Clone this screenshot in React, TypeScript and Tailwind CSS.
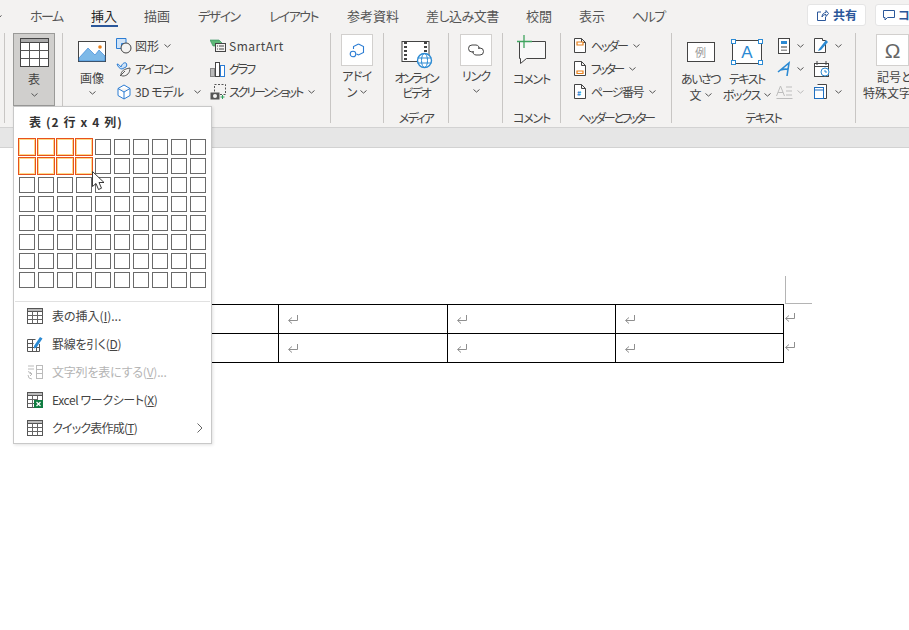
import React from "react";

const Chev = ({ c = "#555" }: { c?: string }) => (
  <svg width="7" height="4" viewBox="0 0 7 4" className="shrink-0">
    <path d="M.5.5l3 2.600 3-2.600" fill="none" stroke={c} strokeWidth="1" />
  </svg>
);

const Sep = () => <div className="w-px h-[90px] bg-[#c8c6c4] shrink-0" />;

const Group = ({ w, label, tr = "", children }: { w: string; label?: string; tr?: string; children?: React.ReactNode }) => (
  <div className={`${w} h-[94px] shrink-0 flex flex-col`}>
    <div className="h-[76px] flex">{children}</div>
    <div className={`h-[18px] leading-[18px] text-center text-[12px] text-[#444] whitespace-nowrap ${tr}`}>{label}</div>
  </div>
);

const Row = ({ icon, text, gap = "gap-[3px]", chev = true, chevGap = "ml-[2px]", tr = "" }: { icon: React.ReactNode; text: string; gap?: string; chev?: boolean; chevGap?: string; tr?: string }) => (
  <div className={`h-[23px] flex items-center ${gap} text-[12px] text-[#444] whitespace-nowrap`}>
    <span className="shrink-0 flex">{icon}</span>
    <span className={tr}>{text}</span>
    {chev && <span className={chevGap}><Chev /></span>}
  </div>
);

const GridIcon = () => (
  <svg width="16" height="16" viewBox="0 0 16 16" className="shrink-0">
    <rect x=".5" y=".5" width="15" height="15" fill="#fff" stroke="#555" />
    <rect x=".5" y=".5" width="15" height="3" fill="#bbb" stroke="#555" />
    <path d="M5.500 3.500v12M10.500 3.500v12M.5 7.500h15M.5 11.500h15" stroke="#666" fill="none" />
  </svg>
);

const Ret = ({ className = "" }: { className?: string }) => (
  <svg width="12" height="11" viewBox="0 0 12 11" className={className}>
    <path d="M10.500 1v5.500H2M5 3.500l-3.500 3 3.500 3" fill="none" stroke="#8f8f8f" strokeWidth="1" />
  </svg>
);

const tabs = [
  { t: "ホーム", w: "w-[61px]", tr: "tracking-[-1.5px]" },
  { t: "挿入", w: "w-[27px] mr-[26px]", tr: "" },
  { t: "描画", w: "w-[54px]", tr: "" },
  { t: "デザイン", w: "w-[71px]", tr: "tracking-[-1.5px]" },
  { t: "レイアウト", w: "w-[78px]", tr: "tracking-[-1.6px]" },
  { t: "参考資料", w: "w-[79px]", tr: "" },
  { t: "差し込み文書", w: "w-[100px]", tr: "tracking-[-0.5px]" },
  { t: "校閲", w: "w-[53px]", tr: "" },
  { t: "表示", w: "w-[53px]", tr: "" },
  { t: "ヘルプ", w: "w-[32px]", tr: "tracking-[-1.5px]" },
];

const TableRow = () => (
  <div className="flex items-center ml-[111px]">
    <div className="flex h-[29px] border-t border-black">
      {["w-[168px]", "w-[169px]", "w-[168px]", "w-[168px]"].map((w, i) => (
        <div key={i} className={`${w} border-r border-black pl-[8px] pt-[9px]`}>
          <Ret />
        </div>
      ))}
    </div>
    <Ret className="-mt-[2px]" />
  </div>
);

export default function App() {
  return (
    <div className="relative w-[909px] h-[630px] overflow-hidden bg-white [font-family:'Noto_Sans_CJK_JP','Liberation_Sans',sans-serif] [font-feature-settings:'palt']">
      {/* tab bar */}
      <div className="h-[33px] bg-[#f3f2f1] flex items-start">
        <div className="w-[30px] pt-[15px] -ml-[5px] mr-[5px] shrink-0"><Chev /></div>
        <div className="flex shrink-0">
          {tabs.map(({ t, w, tr }) => (
            <div
              key={t}
              className={`${w} ${tr} mt-[8px] h-[19px] leading-[16px] text-[13px] border-b-2 whitespace-nowrap ${t === "挿入" ? "border-[#2b579a] text-[#262626]" : "border-transparent text-[#555]"}`}
            >
              {t}
            </div>
          ))}
        </div>
        <div className="flex-1" />
        <div className="mt-[4px] shrink-0 w-[59px] h-[22px] mr-[9px] rounded-[3px] bg-white border border-[#e5e5e5] flex items-center justify-center gap-[4px] text-[12px] font-bold text-[#2b579a]">
          <svg width="13" height="13" viewBox="0 0 13 13">
            <path d="M5 3H1.500v8.500h8V8M6 8c0-3 2-4.500 4-4.500V1.500l2.500 3-2.500 3V5.500C8.500 5.500 7 6 6 8z" fill="none" stroke="#2b579a" />
          </svg>
          共有
        </div>
        <div className="mt-[4px] shrink-0 w-[35px] -mr-px h-[22px] rounded-l-[3px] bg-white border border-[#e5e5e5] flex items-center pl-[7px] gap-[3px] text-[12px] font-bold text-[#2b579a] overflow-hidden">
          <svg width="12" height="12" viewBox="0 0 12 12" className="shrink-0">
            <path d="M.5 1.500h11v7h-7l-2.500 2.500v-2.500h-1.500z" fill="none" stroke="#2b579a" />
          </svg>
          コ
        </div>
      </div>

      {/* ribbon */}
      <div className="h-[94px] bg-[#f3f2f1] flex overflow-hidden">
        <div className="w-[4px] shrink-0" />
        <Sep />
        <Group w="w-[57px]">
          <div className="ml-[8px] w-[42px] h-[73px] bg-[#d0cfcd] border border-[#9a9a98] flex flex-col items-center">
            <svg width="29" height="29" viewBox="0 0 29 29" className="mt-[4px] shrink-0">
              <rect x=".5" y=".5" width="28" height="28" fill="#fff" stroke="#444" />
              <rect x=".5" y=".5" width="28" height="4" fill="#aaa" stroke="#444" />
              <path d="M9.500 4.500v24M19.500 4.500v24M.5 12.500h28M.5 20.500h28" stroke="#555" fill="none" />
            </svg>
            <div className="text-[12px] leading-[16px] mt-[4px] text-[#444]">表</div>
            <div className="mt-[6px]"><Chev /></div>
          </div>
        </Group>
        <Sep />
        <Group w="w-[267px]">
          <div className="ml-[15px] w-[28px] flex flex-col items-center shrink-0">
            <svg width="28" height="21" viewBox="0 0 28 21" className="mt-[8px] shrink-0">
              <rect x=".5" y=".5" width="27" height="20" fill="#fff" stroke="#444" />
              <path d="M1 17l9-10 7 7 4-5 6 6v5H1z" fill="#7db9e8" stroke="#2b7cd3" strokeWidth=".6" />
              <circle cx="22" cy="6" r="1.800" fill="#e8801a" />
            </svg>
            <div className="text-[12px] leading-[16px] mt-[8px] text-[#444] whitespace-nowrap">画像</div>
            <div className="mt-[5px]"><Chev /></div>
          </div>
          <div className="ml-[10px] w-[94px] shrink-0 pt-px">
            <Row
              text="図形"
              icon={
                <svg width="16" height="16" viewBox="0 0 16 16">
                  <path d="M.5.5h9.500v5H5.500V10.500H.5z" fill="#cfe3f7" stroke="#2b7cd3" />
                  <circle cx="10" cy="10" r="5" fill="#f3f2f1" stroke="#444" />
                </svg>
              }
            />
            <Row
              text="アイコン"
              chev={false}
              tr="tracking-[-1.5px]"
              icon={
                <svg width="16" height="16" viewBox="0 0 16 16">
                  <path d="M1 3c2 0 3 2 4 3 1-3 3-5 5-4 1 1 1 3 0 4-1 1-3 1-4 2-2 0-4-2-5-5z" fill="#cfe3f7" stroke="#2b7cd3" />
                  <path d="M5 14c0-4 3-6 9-7 0 5-3 8-7 8-1 0-2-.5-2-1zM4 15l5-5" fill="#f3f2f1" stroke="#555" />
                </svg>
              }
            />
            <Row
              text="3D モデル"
              tr="tracking-[-0.5px]"
              chevGap="ml-[8px]"
              icon={
                <svg width="16" height="16" viewBox="0 0 16 16">
                  <path d="M8 1l6 3.500v7L8 15l-6-3.500v-7zM2 4.500L8 8l6-3.500M8 8v7" fill="#fff" stroke="#2b7cd3" />
                </svg>
              }
            />
          </div>
          <div className="w-[110px] shrink-0 pt-px">
            <Row
              text="SmartArt"
              chev={false}
              tr="tracking-[0.5px]"
              icon={
                <svg width="16" height="16" viewBox="0 0 16 16">
                  <path d="M0 2h9l3 3-3 3H3z" fill="#5fb878" stroke="#2e8b57" strokeWidth=".6" />
                  <rect x="5.500" y="5.500" width="10" height="8" fill="#f3f2f1" stroke="#444" />
                  <path d="M7 8h1M9 8h5M7 11h1M9 11h5" stroke="#444" />
                </svg>
              }
            />
            <Row
              text="グラフ"
              chev={false}
              tr="tracking-[-2px]"
              icon={
                <svg width="16" height="16" viewBox="0 0 16 16">
                  <rect x=".5" y="7.500" width="4" height="8" fill="#bbb" stroke="#888" />
                  <rect x="5.500" y="1.500" width="4" height="14" fill="#fff" stroke="#444" />
                  <rect x="10.500" y="4.500" width="4" height="11" fill="#fff" stroke="#2b7cd3" />
                </svg>
              }
            />
            <Row
              text="スクリーンショット"
              tr="tracking-[-2.1px]"
              chevGap="ml-[3px]"
              icon={
                <svg width="16" height="16" viewBox="0 0 16 16">
                  <rect x="4.500" y=".5" width="11" height="10" fill="none" stroke="#555" strokeDasharray="2 1.500" />
                  <rect x=".5" y="8.500" width="9" height="7" fill="#555" />
                  <circle cx="5" cy="12" r="2" fill="#f3f2f1" />
                  <path d="M12.500 11v4M10.500 13h4" stroke="#2e9e5b" />
                </svg>
              }
            />
          </div>
        </Group>
        <Sep />
        <Group w="w-[52px]">
          <div className="ml-[10px] w-[32px] flex flex-col items-center shrink-0">
            <div className="w-[32px] h-[32px] mt-px shrink-0 bg-white border border-[#d2d0ce] flex items-center justify-center">
              <svg width="17" height="17" viewBox="0 0 17 17">
                <path d="M9.500 2l5 2.500v6l-5 2.500-2-1M4.500 7V4.500l5-2.500" fill="none" stroke="#2b7cd3" strokeWidth="1.100" />
                <circle cx="4" cy="12" r="2.800" fill="none" stroke="#2b7cd3" strokeWidth="1.100" />
              </svg>
            </div>
            <div className="text-[12px] leading-[16px] mt-[2px] text-[#444] whitespace-nowrap text-center tracking-[-0.5px]">アドイ</div>
            <div className="text-[12px] leading-[16px] text-[#444] whitespace-nowrap flex items-center gap-[3px]">ン<Chev /></div>
          </div>
        </Group>
        <Sep />
        <Group w="w-[64px]" label="メディア" tr="tracking-[-1.7px]">
          <div className="w-full flex flex-col items-center">
            <svg width="32" height="28" viewBox="0 0 32 28" className="mt-[8px] ml-[2px] shrink-0">
              <rect x="1" y=".5" width="27" height="20" fill="#fff" stroke="#444" />
              <path d="M4.500 1v20M24.500 1v20" stroke="#444" strokeWidth="3" strokeDasharray="2 2" />
              <circle cx="23.500" cy="19.500" r="7" fill="#fff" stroke="#2b8ad3" strokeWidth="1.400" />
              <ellipse cx="23.500" cy="19.500" rx="3" ry="7" fill="none" stroke="#2b8ad3" />
              <path d="M16.500 17h14M16.500 22h14" stroke="#2b8ad3" />
            </svg>
            <div className="text-[12px] leading-[15px] mt-px text-[#444] whitespace-nowrap text-center tracking-[-2px]">オンライン<br />ビデオ</div>
          </div>
        </Group>
        <Sep />
        <Group w="w-[53px]">
          <div className="ml-[11px] w-[32px] flex flex-col items-center shrink-0">
            <div className="w-[32px] h-[32px] mt-px shrink-0 bg-white border border-[#d2d0ce] flex items-center justify-center">
              <svg width="18" height="12" viewBox="0 0 18 12">
                <path d="M7 8H5a3.500 3.500 0 010-7h4a3.500 3.500 0 013 4" fill="none" stroke="#444" />
                <path d="M11 4h2a3.500 3.500 0 010 7H9a3.500 3.500 0 01-3-4" fill="none" stroke="#444" />
              </svg>
            </div>
            <div className="text-[12px] leading-[16px] mt-[2px] text-[#444] whitespace-nowrap tracking-[-1px]">リンク</div>
            <div className="mt-[5px]"><Chev /></div>
          </div>
        </Group>
        <Sep />
        <Group w="w-[57px]" label="コメント" tr="tracking-[-1.2px]">
          <div className="w-full flex flex-col items-center">
            <svg width="31" height="29" viewBox="0 0 31 29" className="mt-[2px] shrink-0">
              <path d="M3.500 6.500h26v17h-19l-6 5v-5h-1z" fill="#f8f8f8" stroke="#444" />
              <path d="M8 0v13M1 6.500h15" stroke="#3fa45f" strokeWidth="1.300" />
            </svg>
            <div className="text-[12px] leading-[16px] mt-[7px] text-[#444] whitespace-nowrap tracking-[-1.2px]">コメント</div>
          </div>
        </Group>
        <Sep />
        <Group w="w-[110px]" label="ヘッダーとフッター" tr="tracking-[-2.4px]">
          <div className="ml-[13px] pt-px">
            {[
              ["ヘッダー", "M3 4h6v3H3z", "#e8801a", "tracking-[-2.2px]"],
              ["フッター", "M3 10h6v2.500H3z", "#e8801a", "tracking-[-2.5px]"],
              ["ページ番号", "", "", "tracking-[-1.5px]"],
            ].map(([t, d, c, tr]) => (
              <Row
                key={t}
                text={t}
                tr={tr}
                gap="gap-[5px]"
                chevGap="ml-px"
                icon={
                  <svg width="12" height="15" viewBox="0 0 12 15">
                    <path d="M.5.5h7l4 4v10H.5zM7.500.5v4h4" fill="#fff" stroke="#444" />
                    {d ? <path d={d} fill="#fff" stroke={c} strokeWidth="1.200" /> : <text x="3" y="12" fontSize="7" fontWeight="bold" fill="#2b8ad3">#</text>}
                  </svg>
                }
              />
            ))}
          </div>
        </Group>
        <Sep />
        <Group w="w-[183px]" label="テキスト" tr="tracking-[-1.5px]">
          <div className="w-[57px] shrink-0 flex flex-col items-center">
            <div className="mt-[9px] w-[28px] h-[20px] shrink-0 border border-[#444] bg-white flex items-center justify-center text-[11px] text-[#999] leading-none">例</div>
            <div className="text-[12px] leading-[16px] mt-[9px] text-[#444] whitespace-nowrap tracking-[-1.5px]">あいさつ</div>
            <div className="text-[12px] leading-[15px] text-[#444] whitespace-nowrap flex items-center gap-[3px]">文<Chev /></div>
          </div>
          <div className="w-[36px] shrink-0 mr-[13px] flex flex-col items-center">
            <div className="relative mt-[7px] w-[30px] h-[24px] shrink-0 border border-[#444] bg-white flex items-center justify-center text-[17px] text-[#2b8ad3] leading-none [font-family:'Liberation_Sans',sans-serif]">
              A
              <span className="absolute -left-[2px] -top-[2px] w-[3px] h-[3px] bg-white border border-[#2b8ad3] box-content" />
              <span className="absolute -right-[2px] -top-[2px] w-[3px] h-[3px] bg-white border border-[#2b8ad3] box-content" />
              <span className="absolute -left-[2px] -bottom-[2px] w-[3px] h-[3px] bg-white border border-[#2b8ad3] box-content" />
              <span className="absolute -right-[2px] -bottom-[2px] w-[3px] h-[3px] bg-white border border-[#2b8ad3] box-content" />
            </div>
            <div className="text-[12px] leading-[16px] mt-[7px] text-[#444] whitespace-nowrap tracking-[-1.5px]">テキスト</div>
            <div className="text-[12px] leading-[15px] text-[#444] whitespace-nowrap flex items-center gap-[4px]"><span className="tracking-[-1.2px]">ボックス</span><Chev /></div>
          </div>
          <div className="w-[36px] shrink-0 pt-px">
            <div className="h-[23px] flex items-center gap-[7px]">
              <svg width="12" height="16" viewBox="0 0 12 16">
                <rect x=".5" y=".5" width="11" height="15" fill="#fff" stroke="#444" />
                <rect x="3" y="3" width="6" height="3" fill="#2b8ad3" />
                <path d="M3 8h6v2H3zM3 11.500h6v1.500H3z" fill="#999" />
              </svg>
              <Chev />
            </div>
            <div className="h-[23px] flex items-center gap-[4px] -ml-px">
              <svg width="16" height="16" viewBox="0 0 16 16">
                <path d="M1 11L12 2 10 15M3.500 9c3-1 6-1 8-.5" fill="none" stroke="#2b8ad3" strokeWidth="1.600" />
              </svg>
              <Chev />
            </div>
            <div className="h-[23px] flex items-center gap-[4px] -ml-[2px]">
              <svg width="17" height="14" viewBox="0 0 17 14">
                <path d="M.5 11L4.500 1l4 10M2 7.500h5M10 2h6M10 6h6M10 10h6M.5 13.500h16" fill="none" stroke="#bdbdbd" />
              </svg>
              <Chev c="#bbb" />
            </div>
          </div>
          <div className="w-[36px] shrink-0 pt-px">
            <div className="h-[23px] flex items-center gap-[6px]">
              <svg width="15" height="15" viewBox="0 0 15 15">
                <path d="M.5.5h8v2h3v12h-11z" fill="#fff" stroke="#444" />
                <path d="M5 11L12 2l2 2-7 8-3 1z" fill="#2b8ad3" />
              </svg>
              <Chev />
            </div>
            <div className="h-[23px] flex items-center">
              <svg width="16" height="16" viewBox="0 0 16 16">
                <rect x=".5" y="2.500" width="14" height="13" fill="#fff" stroke="#444" />
                <path d="M3 0v4M12 0v4M.5 5.500h14" stroke="#444" />
                <circle cx="11" cy="11" r="4" fill="#fff" stroke="#2b8ad3" />
                <path d="M11 9v2h2" stroke="#2b8ad3" fill="none" />
              </svg>
            </div>
            <div className="h-[23px] flex items-center gap-[6px]">
              <svg width="15" height="15" viewBox="0 0 15 15">
                <path d="M3.500.5h9v14h-9" fill="#fff" stroke="#444" />
                <rect x=".5" y="3.500" width="9" height="11" fill="#fff" stroke="#1f6fc0" />
                <path d="M.5 6h9" stroke="#1f6fc0" />
              </svg>
              <Chev />
            </div>
          </div>
        </Group>
        <Sep />
        <Group w="w-[60px]">
          <div className="flex flex-col items-start shrink-0 w-[60px]">
            <div className="ml-[20px] w-[33px] h-[32px] mt-px shrink-0 bg-white border border-[#d2d0ce] flex items-center justify-center text-[21px] text-[#666] leading-none [font-family:'Liberation_Sans',sans-serif]">Ω</div>
            <div className="ml-[21px] text-[12px] leading-[16px] mt-[3px] text-[#444] whitespace-nowrap">記号と</div>
            <div className="ml-[7px] text-[12px] leading-[15px] text-[#444] whitespace-nowrap">特殊文字</div>
          </div>
        </Group>
      </div>

      {/* band */}
      <div className="h-[21px] bg-[#e6e6e6] border-y border-[#d2d2d2]" />

      {/* document */}
      <div className="flex flex-col">
        <div className="mt-[128px] ml-[785px] w-[27px] h-[28px] border-l border-b border-[#b4b4b4]" />
        <TableRow />
        <TableRow />
        <div className="ml-[111px] w-[673px] h-px bg-black" />
      </div>

      {/* dropdown menu */}
      <div className="absolute left-[13px] top-[106px] w-[199px] h-[338px] bg-white border border-[#c8c8c8] shadow-[1px_1px_3px_rgba(0,0,0,0.12)]">
        <div className="pl-[15px] pt-[6px] h-[32px] text-[12px] leading-[18px] font-bold text-[#333] tracking-[1.1px] whitespace-pre">表 (2 行 x 4 列)</div>
        <div className="grid grid-cols-[repeat(10,16px)] gap-[3px] ml-[5px]">
          {Array.from({ length: 80 }).map((_, i) => {
            const on = i % 10 < 4 && i < 20;
            return (
              <div
                key={i}
                className={
                  on
                    ? "w-[18px] h-[18px] -m-px border border-[#e8521c] shadow-[inset_0_0_0_1px_#fcd98a] bg-white"
                    : "w-[16px] h-[16px] border border-[#6a6a6a] bg-white"
                }
              />
            );
          })}
        </div>
        <div className="mt-[13px] mx-px h-px bg-[#e1e1e1]" />
        <div className="text-[12px] text-[#444]">
          <div className="h-[28px] flex items-center pl-[13px] gap-[9px]">
            <GridIcon />
            <span>表の挿入(<u>I</u>)...</span>
          </div>
          <div className="h-[28px] flex items-center pl-[13px] gap-[9px]">
            <svg width="16" height="16" viewBox="0 0 16 16" className="shrink-0">
              <path d="M.5 3.500h8M.5 3.500v12h12V8M.5 7.500h6M.5 11.500h12M5.500 3.500v12M9.500 9v6.500" stroke="#555" fill="none" />
              <path d="M7 10l6-9 2.500 1.500-6 9-2.500 1z" fill="#2b8ad3" />
            </svg>
            <span className="tracking-[-0.3px]">罫線を引く(<u>D</u>)</span>
          </div>
          <div className="h-[28px] flex items-center pl-[13px] gap-[9px] text-[#b4b4b4]">
            <svg width="16" height="16" viewBox="0 0 16 16" className="shrink-0">
              <path d="M1 2h6M1 5h6M5 10a3.500 3.500 0 01-3.500-3M1 11a4 4 0 004 4M3 8l2 2-2 2" stroke="#bbb" fill="none" />
              <rect x="9.500" y="1.500" width="6" height="13" fill="none" stroke="#bbb" />
              <path d="M9.500 5.500h6M9.500 9.500h6" stroke="#bbb" />
            </svg>
            <span className="tracking-[-0.2px]">文字列を表にする(<u>V</u>)...</span>
          </div>
          <div className="h-[28px] flex items-center pl-[13px] gap-[9px]">
            <svg width="16" height="16" viewBox="0 0 16 16" className="shrink-0">
              <rect x=".5" y=".5" width="15" height="15" fill="#fff" stroke="#555" />
              <rect x=".5" y=".5" width="15" height="3" fill="#bbb" stroke="#555" />
              <path d="M5.500 3.500v12M10.500 3.500v6M.5 7.500h10M.5 11.500h7" stroke="#666" fill="none" />
              <rect x="7" y="8" width="9" height="8" fill="#107c41" />
              <path d="M9.500 10l4 4M13.500 10l-4 4" stroke="#fff" strokeWidth="1.200" />
            </svg>
            <span className="tracking-[-0.4px]">Excel ワークシート(<u>X</u>)</span>
          </div>
          <div className="h-[28px] flex items-center pl-[13px] gap-[9px]">
            <GridIcon />
            <span className="tracking-[-0.8px]">クイック表作成(<u>T</u>)</span>
            <svg width="6" height="10" viewBox="0 0 6 10" className="ml-auto mr-[8px]">
              <path d="M.5.500L5 5 .5 9.500" fill="none" stroke="#666" />
            </svg>
          </div>
        </div>
      </div>

      {/* mouse cursor */}
      <svg width="13" height="20" viewBox="0 0 13 20" className="absolute left-[92px] top-[171px]">
        <path d="M.5.500v15l3.500-3 2.500 6 3-1.300-2.500-5.700h5z" fill="#fff" stroke="#222" strokeWidth=".9" />
      </svg>
    </div>
  );
}
